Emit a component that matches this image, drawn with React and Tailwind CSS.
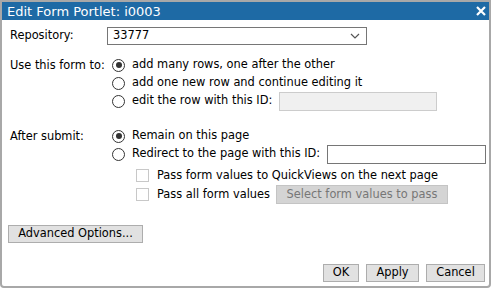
import React from "react";

const font = { fontFamily: '"DejaVu Sans", Verdana, sans-serif' };

function Radio({ checked }) {
  return (
    <span className="relative inline-block w-[13px] h-[13px] rounded-full border border-[#333] bg-white shrink-0">
      {checked && <span className="absolute left-[2.5px] top-[2.5px] w-[6px] h-[6px] rounded-full bg-[#333]" />}
    </span>
  );
}

function Check() {
  return <span className="inline-block w-[13px] h-[13px] border border-[#c8c8c8] bg-white shrink-0" />;
}

export default function App() {
  return (
    <div className="w-[493px] h-[289px] bg-white text-[11.4px] text-black whitespace-nowrap" style={font}>
      <div className="w-[491px] h-[288px] border-2 border-[#a8a8a8] rounded-b-[4px] flex flex-col overflow-hidden">
        <div className="h-[18px] bg-[#1e6aa5] flex items-center justify-between pl-[5px] pr-[2px] shrink-0">
          <span className="text-white text-[13px] leading-none">Edit Form Portlet: i0003</span>
          <svg width="10" height="10" viewBox="0 0 10 10" className="mr-[1px]">
            <path d="M1 1 L9 9 M9 1 L1 9" stroke="white" strokeWidth="2.2" />
          </svg>
        </div>
        <div className="flex-1 flex flex-col pl-[8px] pr-[2px]">
          <div className="flex items-center mt-[7px] h-[17px]">
            <div className="w-[97px] shrink-0">Repository:</div>
            <div className="w-[260px] h-[18px] border border-[#767676] flex items-center justify-between pl-[5px] pr-[6px]">
              <span>33777</span>
              <svg width="10" height="6" viewBox="0 0 10 6">
                <path d="M1 1 L5 5 L9 1" stroke="#555" strokeWidth="1.2" fill="none" />
              </svg>
            </div>
          </div>

          <div className="flex mt-[12px]">
            <div className="w-[97px] shrink-0 pt-[1px]">Use this form to:</div>
            <div className="flex flex-col pl-[5px] shrink-0">
              <div className="flex items-center gap-[7px] h-[18px]"><Radio checked /><span>add many rows, one after the other</span></div>
              <div className="flex items-center gap-[7px] h-[18px]"><Radio /><span>add one new row and continue editing it</span></div>
              <div className="flex items-center gap-[7px] h-[18px]">
                <Radio /><span className="shrink-0">edit the row with this ID:</span>
                <span className="w-[158px] h-[19px] shrink-0 border border-[#cccccc] bg-[#f0f0f0]" />
              </div>
            </div>
          </div>

          <div className="flex mt-[17px]">
            <div className="w-[97px] shrink-0 pt-[1px]">After submit:</div>
            <div className="flex flex-col pl-[5px] shrink-0">
              <div className="flex items-center gap-[7px] h-[18px]"><Radio checked /><span>Remain on this page</span></div>
              <div className="flex items-center gap-[7px] h-[18px]">
                <Radio /><span className="shrink-0">Redirect to the page with this ID:</span>
                <span className="w-[159px] h-[19px] shrink-0 border border-[#767676] bg-white" />
              </div>
              <div className="flex items-center gap-[8px] h-[19px] pl-[24px] mt-[3px]"><Check /><span>Pass form values to QuickViews on the next page</span></div>
              <div className="flex items-center gap-[8px] h-[19px] pl-[24px]">
                <Check /><span className="shrink-0">Pass all form values</span>
                <span className="w-[172px] h-[19px] shrink-0 bg-[#d4d4d4] border border-[#c4c4c4] text-[#777] flex items-center justify-center ml-[-2px]">Select form values to pass</span>
              </div>
            </div>
          </div>

          <div className="mt-[21px] -ml-[2px]">
            <button className="h-[18px] w-[135px] bg-[#e1e1e1] border border-[#adadad] text-[11.4px] leading-none whitespace-nowrap" style={font}>Advanced Options...</button>
          </div>

          <div className="flex justify-end gap-[7px] mt-[21px] pr-[2px]">
            <button className="h-[18px] w-[36px] bg-[#e1e1e1] border border-[#adadad] text-[11.4px] leading-none" style={font}>OK</button>
            <button className="h-[18px] w-[53px] bg-[#e1e1e1] border border-[#adadad] text-[11.4px] leading-none" style={font}>Apply</button>
            <button className="h-[18px] w-[59px] bg-[#e1e1e1] border border-[#adadad] text-[11.4px] leading-none" style={font}>Cancel</button>
          </div>
        </div>
      </div>
    </div>
  );
}
